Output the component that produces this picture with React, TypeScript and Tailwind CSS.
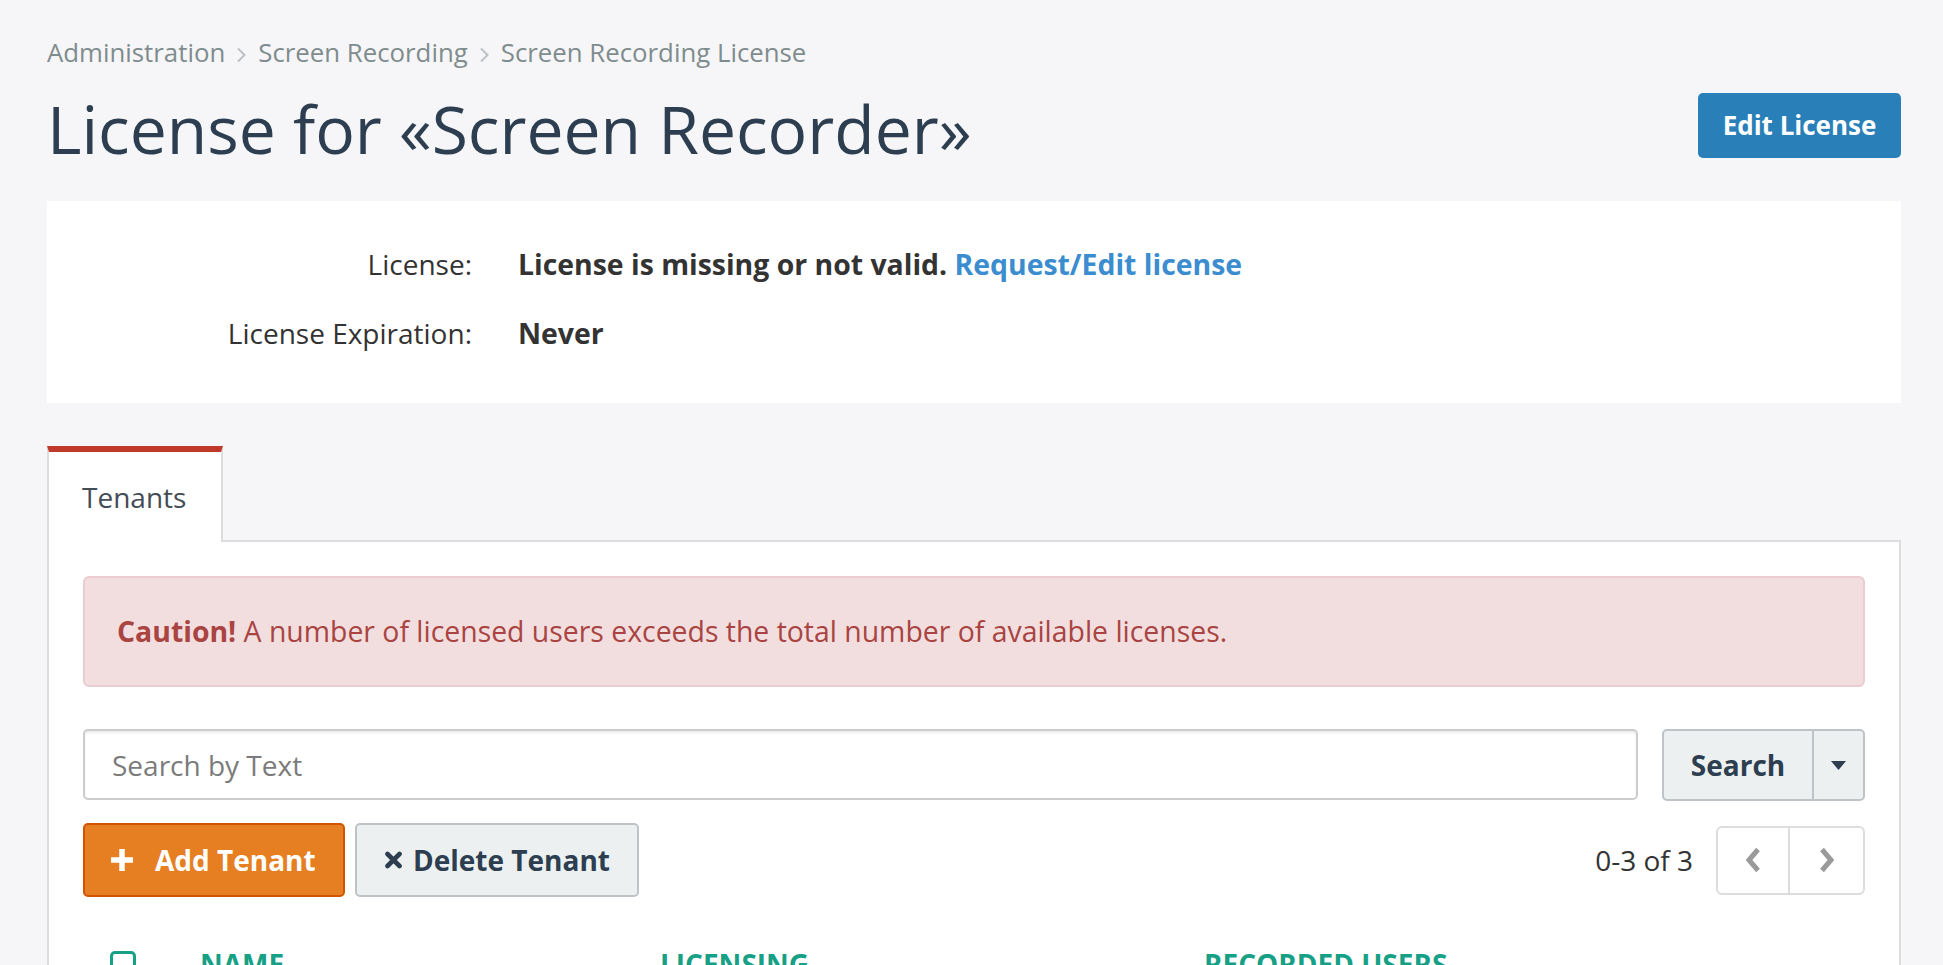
import React from "react";

function CrumbChevron() {
  return (
    <svg width="11" height="16" viewBox="0 0 11 16" className="mx-[11px] translate-y-[3px] shrink-0">
      <path d="M2 1.5 L8.5 8 L2 14.5" fill="none" stroke="#bcc2c6" strokeWidth="2" />
    </svg>
  );
}

function PageChevron({ dir }: { dir: "left" | "right" }) {
  return (
    <svg width="18" height="26" viewBox="0 0 18 26">
      {dir === "left" ? (
        <path d="M14 2.5 L5 13 L14 23.5" fill="none" stroke="#9a9a9a" strokeWidth="5" strokeLinejoin="miter" />
      ) : (
        <path d="M4 2.5 L13 13 L4 23.5" fill="none" stroke="#9a9a9a" strokeWidth="5" strokeLinejoin="miter" />
      )}
    </svg>
  );
}

export default function App() {
  return (
    <div className="min-h-screen bg-[#f6f6f8] font-['Open_Sans','Noto_Sans',sans-serif] pl-[47px] pr-[42px] pt-[34px] pb-[40px]">
      {/* Breadcrumb */}
      <nav className="flex items-center text-[25.8px] leading-[36px] text-[#7f8c8d]">
        <span>Administration</span>
        <CrumbChevron />
        <span>Screen Recording</span>
        <CrumbChevron />
        <span>Screen Recording License</span>
      </nav>

      {/* Title row */}
      <div className="mt-[23px] flex items-start justify-between">
        <h1 className="text-[66px] leading-[70px] font-normal text-[#2c3e50]">License for «Screen Recorder»</h1>
        <button className="h-[65px] w-[203px] rounded-[5px] bg-[#2980b9] text-[26px] font-bold text-white">
          Edit License
        </button>
      </div>

      {/* Info card */}
      <div className="mt-[38px] h-[202px] bg-white pt-[42px]">
        <div className="grid grid-cols-[425px_1fr] gap-x-[46px] gap-y-[27px] text-[28px] leading-[42px] text-[#333333]">
          <div className="text-right">License:</div>
          <div className="text-[28.4px] font-bold">
            License is missing or not valid.{" "}
            <a className="text-[#3b8dd0]">Request/Edit license</a>
          </div>
          <div className="text-right">License Expiration:</div>
          <div className="text-[28.4px] font-bold">Never</div>
        </div>
      </div>

      {/* Tabs */}
      <div className="mt-[43px] flex">
        <div className="relative z-10 -mb-[2px] flex h-[96px] w-[176px] items-center border-x-2 border-t-[6px] border-x-[#dddddd] border-t-[#c0392b] bg-white pl-[33px] text-[28px] text-[#444c55]">
          Tenants
        </div>
      </div>

      {/* Panel */}
      <div className="border-2 border-[#dddddd] bg-white px-[34px] pt-[34px] pb-[60px]">
        {/* Alert */}
        <div className="flex h-[111px] items-center rounded-[6px] border-2 border-[#ebccd1] bg-[#f2dede] px-[32px] text-[28.4px] text-[#a94442]">
          <span>
            <b>Caution!</b> A number of licensed users exceeds the total number of available licenses.
          </span>
        </div>

        {/* Search row */}
        <div className="mt-[42px] flex items-start">
          <input
            placeholder="Search by Text"
            className="h-[71px] min-w-0 flex-1 rounded-[5px] border-2 border-[#cccccc] px-[27px] text-[28px] text-[#333] shadow-[inset_0_2px_2px_rgba(0,0,0,0.08)] outline-none placeholder:text-[#7b7b7b]"
          />
          <div className="ml-[24px] flex h-[72px] w-[203px] rounded-[5px] border-2 border-[#bdc3c7] bg-[#ecf0f1]">
            <div className="flex w-[148px] items-center justify-center text-[28px] font-bold text-[#2c3e50]">Search</div>
            <div className="flex flex-1 items-center justify-center border-l-2 border-[#bdc3c7]">
              <svg width="15" height="9" viewBox="0 0 15 9">
                <polygon points="0,0 15,0 7.5,9" fill="#2c3e50" />
              </svg>
            </div>
          </div>
        </div>

        {/* Buttons row */}
        <div className="mt-[22px] flex items-center">
          <button className="flex h-[74px] w-[262px] items-center rounded-[5px] border-2 border-[#d35400] bg-[#e67e22] pl-[26px] text-[28px] font-bold text-white">
            <svg width="22" height="22" viewBox="0 0 22 22" className="mr-[22px] shrink-0">
              <path d="M11 0 V22 M0 11 H22" stroke="#ffffff" strokeWidth="5.5" />
            </svg>
            Add Tenant
          </button>
          <button className="ml-[10px] flex h-[74px] w-[284px] items-center rounded-[5px] border-2 border-[#bdc3c7] bg-[#ecf0f1] pl-[27px] text-[28px] font-bold text-[#2c3e50]">
            <svg width="19" height="18" viewBox="0 0 19 18" className="mr-[10px] shrink-0">
              <path d="M3.5 3 L15.5 15 M15.5 3 L3.5 15" stroke="#2c3e50" strokeWidth="4.6" strokeLinecap="round" />
            </svg>
            Delete Tenant
          </button>
          <div className="ml-auto flex items-center">
            <span className="text-[28px] text-[#333333]">0-3 of 3</span>
            <div className="ml-[23px] flex h-[69px] w-[149px] rounded-[6px] border-2 border-[#dddddd] bg-white">
              <div className="flex w-[72px] items-center justify-center border-r-2 border-[#dddddd]">
                <PageChevron dir="left" />
              </div>
              <div className="flex flex-1 items-center justify-center">
                <PageChevron dir="right" />
              </div>
            </div>
          </div>
        </div>

        {/* Table header */}
        <div className="mt-[46px] flex items-start pl-[27px] text-[28px] font-bold uppercase leading-[42px] text-[#16a085]">
          <div className="mt-[8px] h-[26px] w-[26px] shrink-0 rounded-[5px] border-[3px] border-[#16a085]" />
          <div className="ml-[64px] w-[460px]">Name</div>
          <div className="w-[544px]">Licensing</div>
          <div>Recorded Users</div>
        </div>
      </div>
    </div>
  );
}
